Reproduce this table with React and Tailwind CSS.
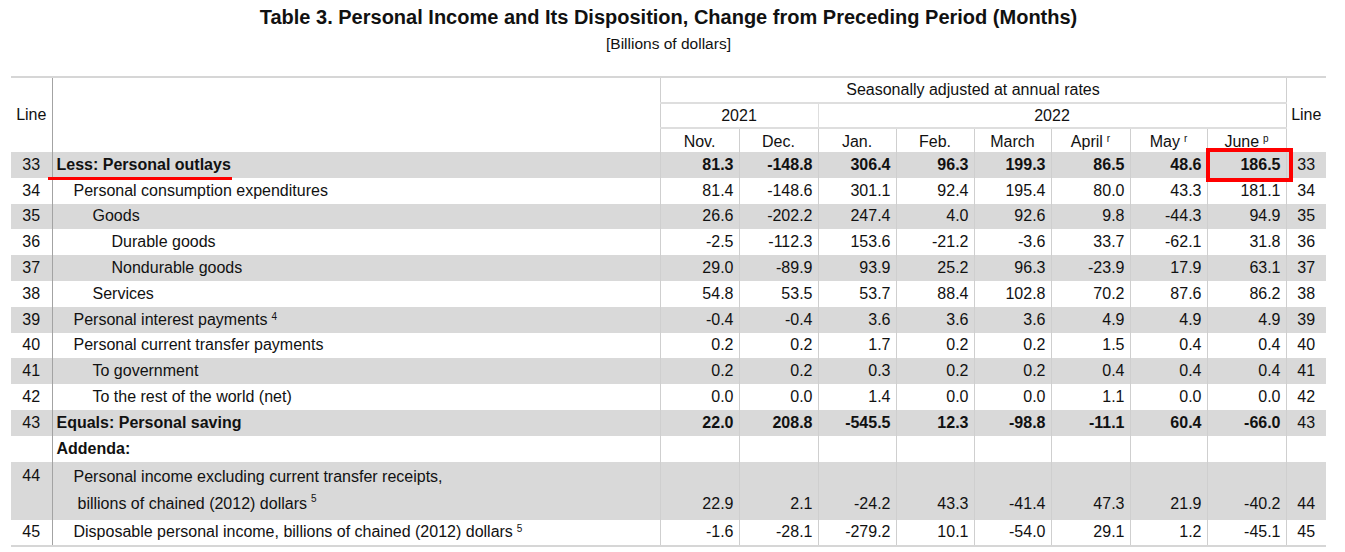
import React from 'react';

const months = [
  { label: 'Nov.' },
  { label: 'Dec.' },
  { label: 'Jan.' },
  { label: 'Feb.' },
  { label: 'March' },
  { label: 'April', sup: 'r' },
  { label: 'May', sup: 'r' },
  { label: 'June', sup: 'p' },
];

const rows = [
  { line: 33, label: 'Less: Personal outlays', indent: 0, bold: true, shade: true, vals: ['81.3', '-148.8', '306.4', '96.3', '199.3', '86.5', '48.6', '186.5'] },
  { line: 34, label: 'Personal consumption expenditures', indent: 1, vals: ['81.4', '-148.6', '301.1', '92.4', '195.4', '80.0', '43.3', '181.1'] },
  { line: 35, label: 'Goods', indent: 2, shade: true, vals: ['26.6', '-202.2', '247.4', '4.0', '92.6', '9.8', '-44.3', '94.9'] },
  { line: 36, label: 'Durable goods', indent: 3, vals: ['-2.5', '-112.3', '153.6', '-21.2', '-3.6', '33.7', '-62.1', '31.8'] },
  { line: 37, label: 'Nondurable goods', indent: 3, shade: true, vals: ['29.0', '-89.9', '93.9', '25.2', '96.3', '-23.9', '17.9', '63.1'] },
  { line: 38, label: 'Services', indent: 2, vals: ['54.8', '53.5', '53.7', '88.4', '102.8', '70.2', '87.6', '86.2'] },
  { line: 39, label: 'Personal interest payments', sup: '4', indent: 1, shade: true, vals: ['-0.4', '-0.4', '3.6', '3.6', '3.6', '4.9', '4.9', '4.9'] },
  { line: 40, label: 'Personal current transfer payments', indent: 1, vals: ['0.2', '0.2', '1.7', '0.2', '0.2', '1.5', '0.4', '0.4'] },
  { line: 41, label: 'To government', indent: 2, shade: true, vals: ['0.2', '0.2', '0.3', '0.2', '0.2', '0.4', '0.4', '0.4'] },
  { line: 42, label: 'To the rest of the world (net)', indent: 2, vals: ['0.0', '0.0', '1.4', '0.0', '0.0', '1.1', '0.0', '0.0'] },
  { line: 43, label: 'Equals: Personal saving', indent: 0, bold: true, shade: true, vals: ['22.0', '208.8', '-545.5', '12.3', '-98.8', '-11.1', '60.4', '-66.0'] },
];

const indents = ['pl-[4px]', 'pl-[21px]', 'pl-[40px]', 'pl-[59px]'];

const lineCell = 'border-r border-[#a3a3a3] text-center';
const stubCell = 'border-r border-[#cfcfcf]';
const numCell = 'border-r border-[#cfcfcf] text-right pr-[5px]';

// small raised footnote marks (r, p, 4, 5)
const Sup = ({ children }) => (
  <sup className="text-[10px] ml-[4px] relative -top-[5px]">{children}</sup>
);

export default function App() {
  return (
    <div className="relative w-[1345px] h-[552px] bg-white text-[#111] font-['Liberation_Sans',Arial,sans-serif] overflow-hidden">
      <div className="ml-[11px] w-[1315px] pt-[5px]">
        <h1 className="text-center text-[20px] leading-[24px] font-bold">
          Table 3. Personal Income and Its Disposition, Change from Preceding Period (Months)
        </h1>
        <div className="mt-[5px] text-center text-[15.5px] leading-[20px]">[Billions of dollars]</div>

        <table className="mt-[22px] table-fixed border-collapse w-[1315px] text-[16px] leading-[20px] border-t-2 border-b-2 border-[#d6d6d6]">
          <colgroup>
            <col className="w-[41px]" />
            <col className="w-[608px]" />
            <col className="w-[79px]" />
            <col className="w-[79px]" />
            <col className="w-[78px]" />
            <col className="w-[78px]" />
            <col className="w-[77px]" />
            <col className="w-[79px]" />
            <col className="w-[77px]" />
            <col className="w-[79px]" />
            <col className="w-[40px]" />
          </colgroup>
          <thead>
            <tr className="h-[26px]">
              <th rowSpan={3} className={`${lineCell} font-normal`}>Line</th>
              <th rowSpan={3} className={stubCell} />
              <th colSpan={8} className="font-normal text-center border-b-2 border-[#dedede]">
                Seasonally adjusted at annual rates
              </th>
              <th rowSpan={3} className="font-normal text-center border-l border-[#cfcfcf]">Line</th>
            </tr>
            <tr className="h-[25px]">
              <th colSpan={2} className="font-normal text-center border-r border-b-2 border-[#dedede]">2021</th>
              <th colSpan={6} className="font-normal text-center border-b-2 border-[#dedede]">2022</th>
            </tr>
            <tr className="h-[24px]">
              {months.map((m) => (
                <th key={m.label} className="font-normal text-center border-r border-[#cfcfcf] align-bottom">
                  {m.label}
                  {m.sup && <Sup>{m.sup}</Sup>}
                </th>
              ))}
            </tr>
          </thead>
          <tbody>
            {rows.map((r) => (
              <tr key={r.line} className={`h-[25.8px] ${r.shade ? 'bg-[#d9d9d9]' : ''}`}>
                <td className={lineCell}>{r.line}</td>
                <td className={`${stubCell} ${indents[r.indent]} ${r.bold ? 'font-bold' : ''}`}>
                  {r.label}
                  {r.sup && <Sup>{r.sup}</Sup>}
                </td>
                {r.vals.map((v, i) => (
                  <td key={i} className={`${numCell} ${r.bold ? 'font-bold' : ''}`}>{v}</td>
                ))}
                <td className="text-center">{r.line}</td>
              </tr>
            ))}

            <tr className="h-[26px]">
              <td className={lineCell} />
              <td className={`${stubCell} pl-[4px] font-bold`}>Addenda:</td>
              {months.map((m) => (
                <td key={m.label} className={numCell} />
              ))}
              <td />
            </tr>

            <tr className="h-[58px] bg-[#d9d9d9]">
              <td className={`${lineCell} align-top pt-[4px]`}>44</td>
              <td className={`${stubCell} pl-[21px] align-top`}>
                <div className="h-[30px] flex items-center">Personal income excluding current transfer receipts,</div>
                <div className="h-[25px] flex items-center pl-[4px]">
                  billions of chained (2012) dollars
                  <Sup>5</Sup>
                </div>
              </td>
              {['22.9', '2.1', '-24.2', '43.3', '-41.4', '47.3', '21.9', '-40.2'].map((v, i) => (
                <td key={i} className={`${numCell} align-bottom pb-[6px]`}>{v}</td>
              ))}
              <td className="text-center align-bottom pb-[6px]">44</td>
            </tr>

            <tr className="h-[26px]">
              <td className={lineCell}>45</td>
              <td className={`${stubCell} pl-[21px]`}>
                Disposable personal income, billions of chained (2012) dollars
                <Sup>5</Sup>
              </td>
              {['-1.6', '-28.1', '-279.2', '10.1', '-54.0', '29.1', '1.2', '-45.1'].map((v, i) => (
                <td key={i} className={numCell}>{v}</td>
              ))}
              <td className="text-center">45</td>
            </tr>
          </tbody>
        </table>
      </div>

      {/* red highlight marks */}
      <div className="absolute left-[48px] top-[177px] w-[184px] h-[3px] bg-[#ff0000]" />
      <div className="absolute left-[1206px] top-[148px] w-[87px] h-[34px] border-4 border-[#ff0000]" />
    </div>
  );
}
